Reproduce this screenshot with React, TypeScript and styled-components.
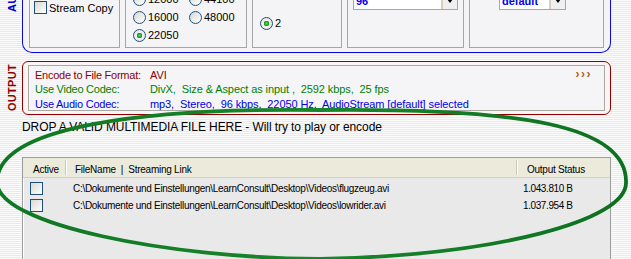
import React from "react";
import styled, { createGlobalStyle } from "styled-components";

const Global = createGlobalStyle`
  html, body { margin: 0; padding: 0; }
  body {
    width: 631px;
    height: 259px;
    overflow: hidden;
    background: repeating-linear-gradient(to bottom, #fbfbfc 0px, #fbfbfc 1px, #ebebef 1px, #ebebef 2px);
    font-family: "Liberation Sans", Arial, sans-serif;
  }
`;

const Page = styled.div`
  position: relative;
  width: 631px;
  height: 259px;
  overflow: hidden;
  display: flex;
  flex-direction: column;
`;

const Section = styled.div<{ $mt: number }>`
  display: grid;
  grid-template-columns: 22px 589px;
  margin-top: ${(p) => p.$mt}px;
`;

const SideLabel = styled.div<{ $color: string; $pb?: number }>`
  display: flex;
  justify-content: center;
  align-items: ${(p) => (p.$pb !== undefined ? "flex-end" : "center")};
  padding-bottom: ${(p) => p.$pb ?? 0}px;
  padding-left: 2px;
  & > span {
    writing-mode: vertical-rl;
    transform: rotate(180deg);
    font-weight: bold;
    font-size: 11px;
    line-height: 11px;
    letter-spacing: 0.3px;
    color: ${(p) => p.$color};
  }
`;

/* ---------- audio panel ---------- */
const AudioPanel = styled.div`
  height: 89px;
  box-sizing: border-box;
  border: 1px solid #0a0ae0;
  border-top: none;
  border-radius: 0 0 10px 10px;
  background: #f4f4f6;
  padding: 6px 6px 4px 6px;
  display: flex;
  gap: 5px;
`;

const Group = styled.div<{ $w?: number; $pt: number; $pl: number }>`
  box-sizing: border-box;
  ${(p) => (p.$w ? `width: ${p.$w}px;` : "flex: 1;")}
  border: 1px solid #a6a6a6;
  background: #f4f4f6;
  padding-top: ${(p) => p.$pt}px;
  padding-left: ${(p) => p.$pl}px;
`;

const OptRow = styled.label`
  height: 18px;
  display: flex;
  align-items: center;
  gap: 2px;
  font-size: 11px;
  color: #000;
`;

const RadioGrid = styled.div`
  display: grid;
  grid-template-columns: 56px auto;
`;

const CheckBox = styled.span`
  width: 13px;
  height: 13px;
  box-sizing: border-box;
  border: 1px solid #1f4f7f;
  background: linear-gradient(135deg, #d9d9d4 0%, #f3f3f1 70%, #ffffff 100%);
  flex: none;
`;

const Radio = styled.span<{ $on?: boolean }>`
  width: 13px;
  height: 13px;
  box-sizing: border-box;
  border-radius: 50%;
  border: 1px solid #1f4f7f;
  background: ${(p) =>
    p.$on
      ? "radial-gradient(circle at 50% 50%, #5fd35f 0, #21a121 2px, #2a8f2a 2.6px, #f2f2ee 3px, #dcdcd6 100%)"
      : "linear-gradient(135deg, #d6d6d0 0%, #f4f4f2 70%, #ffffff 100%)"};
  flex: none;
`;

const Dropdown = styled.div<{ $w: number }>`
  display: flex;
  height: 18px;
  width: ${(p) => p.$w}px;
  box-sizing: border-box;
  border: 1px solid #a3a8ad;
  background: #fff;
`;

const DropText = styled.div`
  flex: 1;
  font-size: 11px;
  font-weight: bold;
  color: #0000ee;
  padding-left: 2px;
  line-height: 16px;
`;

const DropButton = styled.div`
  width: 16px;
  box-sizing: border-box;
  border-left: 2px solid #d8cfb8;
  background: #efefef;
  display: flex;
  align-items: center;
  justify-content: center;
  &::after {
    content: "";
    border-left: 3px solid transparent;
    border-right: 3px solid transparent;
    border-top: 4px solid #000;
  }
`;

/* ---------- output panel ---------- */
const OutputPanel = styled.div`
  height: 54px;
  box-sizing: border-box;
  border: 1px solid #8c0000;
  border-radius: 6px 7px 7px 6px;
  background: #fcf4f4;
  padding: 3px 5px 3px 5px;
`;

const OutputInner = styled.div`
  height: 46px;
  box-sizing: border-box;
  border: 1px solid #a9a9a3;
  background: #f5f5f7;
  padding: 1.5px 12px 0 6px;
  display: grid;
  grid-template-columns: 115px 1fr auto;
  grid-auto-rows: 14.5px;
  align-items: center;
  font-size: 11px;
  white-space: pre;
`;

const Cell = styled.span<{ $color: string; $ls?: number }>`
  color: ${(p) => p.$color};
  line-height: 14.5px;
  letter-spacing: ${(p) => p.$ls ?? -0.1}px;
`;

const More = styled.span`
  color: #b0600c;
  font-weight: bold;
  font-size: 12px;
  letter-spacing: 1.5px;
  align-self: start;
  line-height: 13px;
`;

/* ---------- drop text ---------- */
const DropHint = styled.div`
  grid-column: 2;
  font-size: 12px;
  line-height: 14px;
  letter-spacing: -0.08px;
  color: #000;
`;

/* ---------- list view ---------- */
const ListView = styled.div`
  grid-column: 2;
  height: 110px;
  box-sizing: border-box;
  border: 1px solid #9c9c9c;
  box-shadow: inset 1px 1px 0 #ffffff;
  background: #e9e9e9;
  font-size: 10px;
  color: #000;
`;

const Cols = "42px 451px 1fr";

const Header = styled.div`
  display: grid;
  grid-template-columns: ${Cols};
  height: 20px;
  box-sizing: border-box;
  background: #ebeadb;
  border-bottom: 1px solid #d2cfbf;
  letter-spacing: -0.25px;
`;

const HeadCell = styled.div<{ $sep?: boolean; $pl: number }>`
  display: flex;
  align-items: center;
  padding-left: ${(p) => p.$pl}px;
  padding-top: 3px;
  white-space: pre;
  ${(p) => (p.$sep ? "border-left: 1px solid #cac7b6; box-shadow: inset 1px 0 0 #fff;" : "")}
  margin: 2px 0 2px 0;
`;

const Rows = styled.div`
  padding-top: 2px;
`;

const Row = styled.div`
  display: grid;
  grid-template-columns: ${Cols};
  height: 17px;
  align-items: center;
`;

const RowCell = styled.div<{ $pl: number; $ls?: number }>`
  padding-left: ${(p) => p.$pl}px;
  display: flex;
  align-items: center;
  white-space: pre;
  letter-spacing: ${(p) => p.$ls ?? 0}px;
`;

const Overlay = styled.svg`
  position: absolute;
  left: 0;
  top: 0;
  pointer-events: none;
`;

const files = [
  { path: "C:\\Dokumente und Einstellungen\\LearnConsult\\Desktop\\Videos\\flugzeug.avi", size: "1.043.810 B" },
  { path: "C:\\Dokumente und Einstellungen\\LearnConsult\\Desktop\\Videos\\lowrider.avi", size: "1.037.954 B" },
];

export default function App() {
  return (
    <>
      <Global />
      <Page>
        <Section $mt={-36}>
          <SideLabel $color="#0000cc" $pb={41}>
            <span>AUDIO</span>
          </SideLabel>
          <AudioPanel>
            <Group $w={91} $pt={27.5} $pl={4}>
              <OptRow>
                <CheckBox />
                Stream Copy
              </OptRow>
            </Group>
            <Group $w={122} $pt={19} $pl={7}>
              <RadioGrid>
                <OptRow><Radio />12000</OptRow>
                <OptRow><Radio />44100</OptRow>
                <OptRow><Radio />16000</OptRow>
                <OptRow><Radio />48000</OptRow>
                <OptRow><Radio $on />22050</OptRow>
              </RadioGrid>
            </Group>
            <Group $w={90} $pt={43} $pl={7}>
              <OptRow><Radio $on />2</OptRow>
            </Group>
            <Group $w={117} $pt={21} $pl={5}>
              <Dropdown $w={105}>
                <DropText>96</DropText>
                <DropButton />
              </Dropdown>
            </Group>
            <Group $pt={21} $pl={29}>
              <Dropdown $w={67}>
                <DropText>default</DropText>
                <DropButton />
              </Dropdown>
            </Group>
          </AudioPanel>
        </Section>

        <Section $mt={8}>
          <SideLabel $color="#8c0000">
            <span>OUTPUT</span>
          </SideLabel>
          <OutputPanel>
            <OutputInner>
              <Cell $color="#8c0000" $ls={-0.25}>Encode to File Format:</Cell>
              <Cell $color="#8c0000">AVI</Cell>
              <More>›››</More>
              <Cell $color="#008000" $ls={-0.25}>Use Video Codec:</Cell>
              <Cell $color="#008000">DivX,  Size &amp; Aspect as input ,  2592 kbps,  25 fps</Cell>
              <span />
              <Cell $color="#0000ee" $ls={-0.25}>Use Audio Codec:</Cell>
              <Cell $color="#0000ee">mp3,  Stereo,  96 kbps,  22050 Hz,  AudioStream [default] selected</Cell>
              <span />
            </OutputInner>
          </OutputPanel>
        </Section>

        <Section $mt={5}>
          <DropHint>DROP A VALID MULTIMEDIA FILE HERE - Will try to play or encode</DropHint>
        </Section>

        <Section $mt={23}>
          <ListView>
            <Header>
              <HeadCell $pl={10}>Active</HeadCell>
              <HeadCell $sep $pl={9}>{"FileName  |  Streaming Link"}</HeadCell>
              <HeadCell $sep $pl={10}>Output Status</HeadCell>
            </Header>
            <Rows>
              {files.map((f) => (
                <Row key={f.path}>
                  <RowCell $pl={7}><CheckBox /></RowCell>
                  <RowCell $pl={8} $ls={-0.3}>{f.path}</RowCell>
                  <RowCell $pl={7} $ls={-0.4}>{f.size}</RowCell>
                </Row>
              ))}
            </Rows>
          </ListView>
        </Section>

        <Overlay width="631" height="259" viewBox="0 0 631 259">
          <defs>
            <linearGradient id="ring" x1="0" y1="0" x2="1" y2="0">
              <stop offset="0" stopColor="#0f7622" />
              <stop offset="0.5" stopColor="#18862c" />
              <stop offset="1" stopColor="#0d7020" />
            </linearGradient>
          </defs>
          <path
            d="M320 110 C520 108 628 125 626 183 C626 220 500 255 320 259 C170 258 -3 225 -3 182 C-3 125 150 108 320 110 Z"
            fill="none"
            stroke="url(#ring)"
            strokeWidth="3.8"
          />
        </Overlay>
      </Page>
    </>
  );
}
